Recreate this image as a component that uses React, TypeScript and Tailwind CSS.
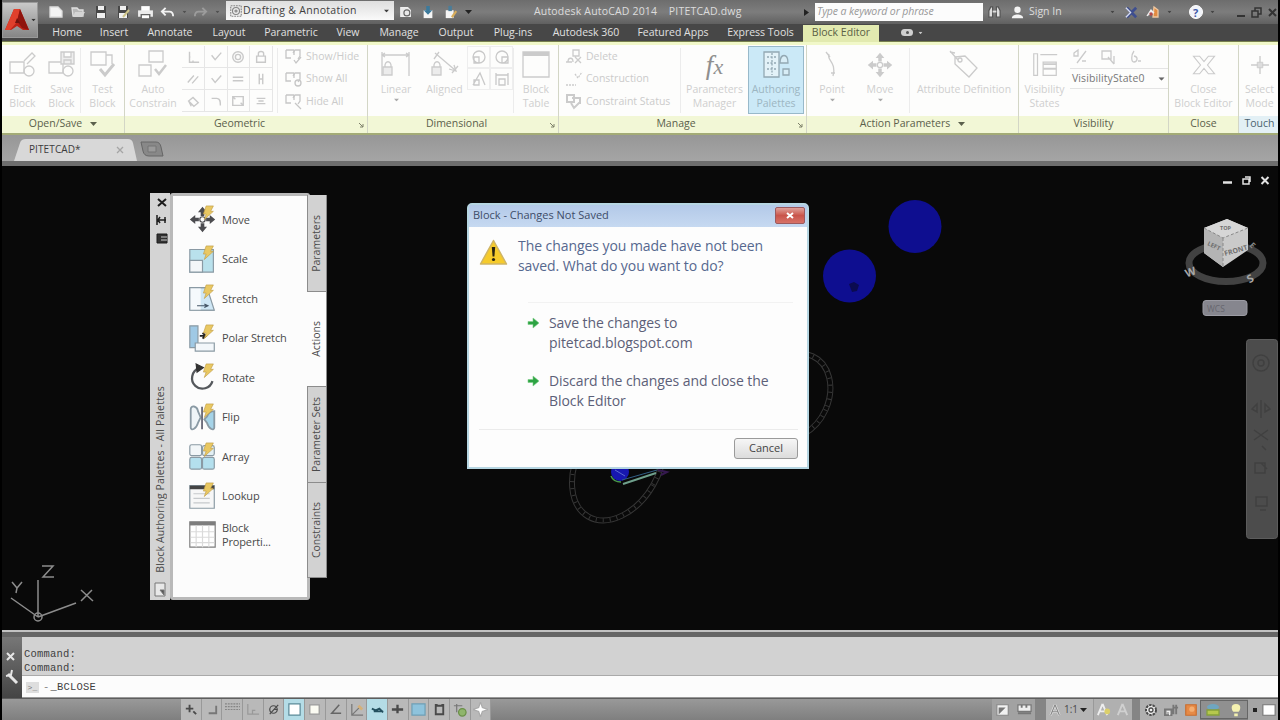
import type { ReactNode } from 'react'
import { clsx } from 'clsx'

const MENU = [
  { label: 'Home', width: 'w-[48px]' },
  { label: 'Insert', width: 'w-[46px]' },
  { label: 'Annotate', width: 'w-[66px]' },
  { label: 'Layout', width: 'w-[52px]' },
  { label: 'Parametric', width: 'w-[72px]' },
  { label: 'View', width: 'w-[42px]' },
  { label: 'Manage', width: 'w-[60px]' },
  { label: 'Output', width: 'w-[54px]' },
  { label: 'Plug-ins', width: 'w-[60px]' },
  { label: 'Autodesk 360', width: 'w-[86px]' },
  { label: 'Featured Apps', width: 'w-[88px]' },
  { label: 'Express Tools', width: 'w-[87px]' },
]

// All line icons share the same wrapper, the colour comes from the parent.
function Svg({
  size = 32,
  box = 32,
  className,
  children,
}: {
  size?: number
  box?: number
  className?: string
  children: ReactNode
}) {
  return (
    <svg
      width={size}
      height={size}
      viewBox={`0 0 ${box} ${box}`}
      fill="none"
      stroke="currentColor"
      strokeWidth={1.3}
      className={clsx('shrink-0', className)}
    >
      {children}
    </svg>
  )
}

function Caret({ className }: { className?: string }) {
  return (
    <svg width="7" height="4" viewBox="0 0 7 4" className={clsx('shrink-0', className)}>
      <path d="M0 0h7L3.5 4z" fill="currentColor" />
    </svg>
  )
}

/* ---------- title bar ---------- */

function TitleBar() {
  return (
    <div className="flex h-6 items-center bg-linear-to-b from-[#6d6d6d] via-[#7d7d7d] to-[#606060] text-[10.5px] text-[#dcdcdc]">
      <div className="w-[43px] shrink-0" />
      <div className="flex w-[181px] shrink-0 items-center">
        <Svg size={16} box={16} className="ml-[3px]">
          <path d="M2 3h8l4 4v6H2z" fill="#f4f4f4" stroke="#ddd" />
        </Svg>
        <Svg size={16} box={16} className="ml-[6px]">
          <path d="M2 4h5l2 2h4v6H3z" fill="#b9b9b9" stroke="#e0e0e0" />
          <path d="M5 8h10l-3 5H3z" fill="#d5d5d5" stroke="none" />
        </Svg>
        <Svg size={16} box={16} className="ml-[7px]">
          <path d="M3 2h10v12H3z" fill="#474747" stroke="none" />
          <path d="M5 2h6v4H5zM4 9h8v5H4z" fill="#f0f0f0" stroke="none" />
        </Svg>
        <Svg size={16} box={16} className="ml-[6px]">
          <path d="M3 2h10v12H3z" fill="#474747" stroke="none" />
          <path d="M5 2h6v4H5zM4 9h8v5H4z" fill="#f0f0f0" stroke="none" />
          <path d="M8 13l6-7" stroke="#cfc58a" strokeWidth={2} />
        </Svg>
        <Svg size={17} box={16} className="ml-[6px]">
          <path d="M4 2h8v5H4z" fill="#fff" stroke="none" />
          <path d="M1 6h14v6H1z" fill="#ececec" stroke="none" />
          <path d="M4 10h8v4H4z" fill="#fff" stroke="#666" />
        </Svg>
        <Svg size={15} box={16} className="ml-[6px]">
          <path d="M2 7h8c3 0 4 2 4 5M6 3L2 7l4 4" stroke="#f2f2f2" strokeWidth={2} />
        </Svg>
        <Caret className="ml-[6px] scale-[.6] text-[#505050]" />
        <Svg size={15} box={16} className="ml-[5px]">
          <path d="M14 7H6c-3 0-4 2-4 5M10 3l4 4-4 4" stroke="#9c9c9c" strokeWidth={2} />
        </Svg>
        <Caret className="ml-[6px] scale-[.6] text-[#505050]" />
      </div>
      <div className="mb-[3px] flex h-[19px] w-[168px] shrink-0 items-center bg-linear-to-b from-[#dedede] to-[#fafafa] pl-[3px] pr-1 text-[#3e3e3e]">
        <Svg size={14} box={16} className="text-[#858585]">
          <path d="M2 2h12v12H2z" strokeDasharray="2 1" />
          <circle cx="8" cy="8" r="4" />
          <circle cx="8" cy="8" r="1.2" />
        </Svg>
        <span className="flex-1 whitespace-nowrap tracking-[0.3px]">Drafting &amp; Annotation</span>
        <Caret className="scale-75" />
      </div>
      <div className="flex w-[140px] shrink-0 items-center">
        <Svg size={14} box={16} className="ml-[5px]">
          <path d="M2 3h8l3 3v7H2z" fill="#e8e8e8" stroke="#eee" />
          <circle cx="9" cy="9" r="3.4" stroke="#666" />
        </Svg>
        <Svg size={14} box={16} className="ml-[8px]">
          <path d="M3 6h10v9H3z" fill="#f5f5f5" stroke="none" />
          <path d="M6 1h4v5h3l-5 5-5-5h3z" fill="#3b7a9c" stroke="none" />
        </Svg>
        <Svg size={14} box={16} className="ml-[9px]">
          <path d="M2 6h9v9H2z" fill="#f5f5f5" stroke="none" />
          <path d="M5 1h4v6H5z" fill="#4a7d9a" stroke="none" />
          <path d="M9 14l5-7" stroke="#d8ad5a" strokeWidth={2.5} />
        </Svg>
        <Caret className="ml-[7px] text-[#222]" />
      </div>
      <div className="w-[270px] shrink-0 whitespace-pre tracking-[0.18px]">
        {'Autodesk AutoCAD 2014    PITETCAD.dwg'}
      </div>
      <svg width="5" height="7" viewBox="0 0 5 7" className="shrink-0">
        <path d="M0 0l5 3.500L0 7z" fill="#222" />
      </svg>
      <div className="ml-[6px] flex h-[18px] w-[168px] shrink-0 items-center bg-[#fcfcfc] pl-[2px] text-[10.5px] italic tracking-[-0.1px] text-[#999]">
        Type a keyword or phrase
      </div>
      <div className="ml-[4px] flex flex-1 items-center">
        <Svg size={15} box={16}>
          <path d="M2 13V6l2-4h2v11zM14 13V6l-2-4h-2v11z" fill="#ddd" stroke="#555" />
          <path d="M6 7h4" stroke="#ddd" strokeWidth={2} />
        </Svg>
        <Svg size={15} box={16} className="ml-[8px]">
          <circle cx="8" cy="5" r="3.4" fill="#f3f3f3" stroke="none" />
          <path d="M2 14c0-5 12-5 12 0z" fill="#f3f3f3" stroke="none" />
        </Svg>
        <span className="ml-[4px] whitespace-nowrap">Sign In</span>
        <Caret className="ml-[47px] scale-[.6] text-[#444]" />
        <Svg size={15} box={16} className="ml-[8px]">
          <path d="M3 3l5 5-5 5M13 3L8 8l5 5" stroke="#3e4e8f" strokeWidth={3} />
          <path d="M2 3l5 5-5 5" stroke="#d7dcee" strokeWidth={1.5} />
        </Svg>
        <Svg size={16} box={16} className="ml-[7px]">
          <path d="M8 3l4 3v7H7z" fill="#e28b41" stroke="#f0c8a0" />
          <path d="M1 12l4-6 3 3" fill="#eee" stroke="#eee" />
          <circle cx="5" cy="10" r="1.7" fill="#b5484a" stroke="none" />
        </Svg>
        <Caret className="ml-[4px] scale-[.6] text-[#444]" />
        <span className="ml-[16px] flex size-[14px] items-center justify-center rounded-full border border-white bg-[#f2f4fa] text-[11px] font-bold leading-none text-[#3f5aa8]">
          ?
        </span>
        <Caret className="ml-[6px] scale-[.6] text-[#444]" />
        <Svg size={42} box={42} className="ml-auto text-[#333]">
          <path d="M1 25h8" strokeWidth={2} />
          <path d="M16 20h6v6h-6zM19 20v-3h6v6h-3" strokeWidth={1.5} />
          <path d="M33 18l7 7m0-7l-7 7" strokeWidth={2} />
        </Svg>
      </div>
    </div>
  )
}

function MenuBar() {
  return (
    <div className="flex h-[18px] items-stretch border-b border-[#77804f] bg-[#474747] pl-[41px] text-[10.5px] font-medium text-[#e0e0e0]">
      {MENU.map((m) => (
        <div key={m.label} className={clsx('flex shrink-0 items-center justify-center whitespace-nowrap', m.width)}>
          {m.label}
        </div>
      ))}
      <div className="-mb-px -ml-px mt-px flex w-[76px] shrink-0 items-center justify-center whitespace-nowrap bg-[#e2eab0] pb-px text-[#5a6046]">
        Block Editor
      </div>
      <div className="ml-[22px] flex items-center">
        <div className="flex h-[7px] w-[12px] items-center justify-center rounded-sm bg-[#d0d0d0]">
          <div className="size-[3px] rounded-full bg-[#555]" />
        </div>
        <Caret className="ml-[4px] scale-[.6] text-[#c8c8c8]" />
      </div>
    </div>
  )
}

/* ---------- ribbon ---------- */

function Panel({
  title,
  width,
  caret,
  launcher,
  touch,
  children,
}: {
  title: string
  width: string
  caret?: boolean
  launcher?: boolean
  touch?: boolean
  children: ReactNode
}) {
  return (
    <div className={clsx('flex shrink-0 flex-col border-r border-[#d3d6c6]', width)}>
      <div className="flex h-[71px] overflow-hidden bg-[#fdfdfc]">{children}</div>
      <div
        className={clsx(
          'flex h-[17px] items-center justify-center whitespace-nowrap pb-px text-[10.5px] font-medium',
          touch ? 'bg-[#e3f0f5] text-[#4b6470]' : 'bg-[#f2f7d6] text-[#5b604c]',
        )}
      >
        <span className={clsx(launcher && 'flex-1 pr-1 text-center')}>{title}</span>
        {caret && <Caret className="ml-2" />}
        {launcher && (
          <svg width="6" height="6" viewBox="0 0 6 6" className="mr-[3px] mt-[2px]">
            <path d="M1 1l4 4M5 2v3H2" fill="none" stroke="#7d8069" />
          </svg>
        )}
      </div>
    </div>
  )
}

function Tool({
  icon,
  lines,
  width,
  caret,
  active,
}: {
  icon: ReactNode
  lines: string[]
  width: string
  caret?: boolean
  active?: boolean
}) {
  return (
    <div
      className={clsx(
        'flex shrink-0 flex-col items-center whitespace-nowrap text-[10.5px] leading-[14px]',
        active
          ? 'mt-px h-[68px] border border-[#98b9ca] bg-[#cbe9f7] pt-px text-[#9db6c2]'
          : 'pt-[3px] text-[#cfcfcf]',
        width,
      )}
    >
      <div className="flex h-[34px] items-center text-[#cbcbcb]">{icon}</div>
      {lines.map((l) => (
        <span key={l}>{l}</span>
      ))}
      {caret && <Caret className="mt-[2px] scale-75 text-[#aaa]" />}
    </div>
  )
}

function ListTool({ icon, label }: { icon: ReactNode; label: string }) {
  return (
    <div className="mt-px flex h-[21.5px] items-center whitespace-nowrap text-[10.5px] text-[#cbcbcb]">
      {icon}
      <span className="ml-[2px]">{label}</span>
    </div>
  )
}

function Divider() {
  return <div className="my-[3px] w-px shrink-0 bg-[#ececec]" />
}

const BLOCK_SHAPE = (
  <>
    <path d="M3 13h14v11H3z" />
    <circle cx="22" cy="22" r="5" />
  </>
)

const LOCK = (
  <>
    <path d="M3 18h9v8H3z" fill="#ececec" />
    <path d="M5 18c-1-7 7-7 6 0" />
  </>
)

const GEOMETRIC = [
  'M4 2v12h11M4 8h1M8 14v-2',
  'M3 6l4 5 7-8',
  'M8 2a6 6 0 100 12A6 6 0 008 2M8 5a3 3 0 100 6 3 3 0 000-6',
  'M3 7h10v7H3zM5 7V4c0-3 6-3 6 0v3',
  'M2 12l7-8M7 13l7-8',
  'M3 7l4 5 7-8',
  'M2 6h12M2 10h12',
  'M6 2v12M10 2v12M6 8h4',
  'M3 8l5-4 6 6-5 4zM3 8l3 6',
  'M3 5h6c4 0 4 4 4 8',
  'M2 3h12v10H2zM2 3l3 3M14 13l-3-3',
  'M3 5h10M3 11h10M5 8h6',
]

const DIMENSIONAL = [
  'M8 2a6 6 0 100 12A6 6 0 008 2M3 8h5v6H3z',
  'M8 2a6 6 0 100 12A6 6 0 008 2M8 8h6v6H8z',
  'M2 14L9 2l5 12M3 9h5v5H3z',
  'M2 2v12M14 2v12M2 4h12M5 8h6v6H5z',
]

function ShowIcon({ kind }: { kind: number }) {
  return (
    <Svg size={19} box={19} className="text-[#c6c6c6]">
      <path d="M1 3h8M1 3v8h5M9 3v5" />
      <path d="M8 6l2-3h5v6l-2 3" />
      {kind === 0 && <path d="M9 13l2 3 5-6" />}
      {kind === 1 && <circle cx="13" cy="13" r="3" />}
      {kind === 2 && <path d="M10 11l6 6" />}
    </Svg>
  )
}

function MoveArrows() {
  return (
    <>
      <path
        d="M16 2l5 6h-3v4h-4V8h-3zM16 30l5-6h-3v-4h-4v4h-3zM2 16l6-5v3h4v4H8v3zM30 16l-6-5v3h-4v4h4v3z"
        fill="currentColor"
        stroke="none"
      />
      <circle cx="16" cy="16" r="3" />
    </>
  )
}

function Ribbon() {
  return (
    <div className="flex h-[93px] overflow-hidden border-b-2 border-t-[3px] border-b-[#a3ab76] border-t-[#f1f8c9] bg-[#fdfdfc]">
      <Panel title="Open/Save" width="w-[123px]" caret>
        <Tool
          width="w-[41px]"
          lines={['Edit', 'Block']}
          icon={<Svg>{BLOCK_SHAPE}<path d="M17 12l8-8 3 3-8 8" /></Svg>}
        />
        <Tool
          width="w-[37px]"
          lines={['Save', 'Block']}
          icon={<Svg>{BLOCK_SHAPE}<path d="M15 3h13v12H15zM18 3v5h7V3M18 15v-4h7v4" fill="#eee" /></Svg>}
        />
        <Divider />
        <Tool
          width="w-[43px]"
          lines={['Test', 'Block']}
          icon={<Svg><path d="M4 3h15v13H4zM19 6h6v9" /><path d="M13 20l5 6 9-11" strokeWidth={3} /></Svg>}
        />
      </Panel>

      <Panel title="Geometric" width="w-[243px]" launcher>
        <Tool
          width="w-[56px]"
          lines={['Auto', 'Constrain']}
          icon={<Svg><path d="M12 2h14v11H12zM2 16h12v11H2z" /><path d="M18 20l4 5 7-9" strokeWidth={2.5} /></Svg>}
        />
        <div className="ml-[1px] mt-px grid h-[66px] w-[91px] shrink-0 grid-cols-4 text-[#c9c9c9]">
          {GEOMETRIC.map((d, i) => (
            <div key={i} className="flex items-center justify-center border-b border-r border-[#e6e6e6]">
              <Svg size={14} box={16}><path d={d} strokeWidth={1.6} /></Svg>
            </div>
          ))}
        </div>
        <div className="w-[4px]" />
        <Divider />
        <div className="ml-[7px]">
          <ListTool label="Show/Hide" icon={<ShowIcon kind={0} />} />
          <ListTool label="Show All" icon={<ShowIcon kind={1} />} />
          <ListTool label="Hide All" icon={<ShowIcon kind={2} />} />
        </div>
      </Panel>

      <Panel title="Dimensional" width="w-[191px]" launcher>
        <Tool
          width="w-[56px]"
          lines={['Linear']}
          caret
          icon={<Svg><path d="M2 3v24M29 3v24M2 6h27M5 4L2 6l3 2M26 4l3 2-3 2" />{LOCK}</Svg>}
        />
        <Tool
          width="w-[41px]"
          lines={['Aligned']}
          icon={<Svg><path d="M6 4l20 17M5 10L10 3M23 24l6-7M20 20l7 2-2-6" />{LOCK}</Svg>}
        />
        <div className="ml-[2px] mt-px grid h-[44px] w-[46px] shrink-0 grid-cols-2 text-[#c9c9c9]">
          {DIMENSIONAL.map((d, i) => (
            <div key={i} className="flex items-center justify-center border border-[#eeeeee]">
              <Svg size={16} box={16}><path d={d} /></Svg>
            </div>
          ))}
        </div>
        <div className="w-[2px]" />
        <Divider />
        <Tool
          width="w-[44px]"
          lines={['Block', 'Table']}
          icon={<Svg><path d="M3 3h26v25H3z" /><path d="M3 5h26" strokeWidth={4} /></Svg>}
        />
      </Panel>

      <Panel title="Manage" width="w-[248px]" launcher>
        <div className="ml-[6px] w-[115px] shrink-0">
          <ListTool label="Delete" icon={<Svg size={19} box={19}><path d="M1 15h6M3 15c0-5 5-5 5 0M8 3h6v6H8zM10 10l6 6m0-6l-6 6" /></Svg>} />
          <ListTool label="Construction" icon={<Svg size={19} box={19}><path d="M1 15h10M10 4l3 4 4-6" strokeDasharray="2 1" /></Svg>} />
          <ListTool label="Constraint Status" icon={<Svg size={19} box={19}><path d="M2 3h7v7H2zM7 6h8v6M6 11l3 5 6-6" strokeWidth={2} /></Svg>} />
        </div>
        <Divider />
        <Tool
          width="w-[67px]"
          lines={['Parameters', 'Manager']}
          icon={<span className="font-['Liberation_Serif',serif] text-[27px] italic leading-none text-[#8f8f8f]"><i>f</i><i className="text-[22px]">x</i></span>}
        />
        <Tool
          active
          width="w-[56px]"
          lines={['Authoring', 'Palettes']}
          icon={
            <Svg className="text-[#93a8b3]">
              <path d="M4 3h15v25H4z" fill="#e3f2f8" />
              <path d="M7 8h9M7 14h9M7 20h9M12 4v22" strokeDasharray="2 1.5" />
              <path d="M20 14c0-10 8-10 8 0zM23 20h6v6h-6z" fill="#d8edf6" />
            </Svg>
          }
        />
      </Panel>

      <Panel title="Action Parameters" width="w-[212px]" caret>
        <Tool width="w-[50px]" lines={['Point']} caret icon={<Svg><path d="M10 3l4 5M13 5c-3 6 8 8 4 22M19 24h-4" /></Svg>} />
        <Tool width="w-[46px]" lines={['Move']} caret icon={<Svg size={28}><MoveArrows /></Svg>} />
        <div className="w-[6px]" />
        <Divider />
        <Tool
          width="w-[108px]"
          lines={['Attribute Definition']}
          icon={<Svg><path d="M7 8l10-1 12 12-8 9L7 15zM2 2l8 9M2 3l5 1" /><circle cx="12" cy="11" r="2" /></Svg>}
        />
      </Panel>

      <Panel title="Visibility" width="w-[150px]">
        <Tool
          width="w-[51px]"
          lines={['Visibility', 'States']}
          icon={<Svg size={30}><path d="M4 4h4v23H4zM11 5h18M14 13h14v14H14z" /><path d="M14 15h14M14 20h14" strokeWidth={2} /></Svg>}
        />
        <div className="flex flex-1 flex-col">
          <div className="flex h-[23px] items-center gap-[9px] pl-[2px] text-[#cbcbcb]">
            <Svg size={18} box={18}><path d="M2 5l4-3v6H2zM5 15L14 3M10 13h4" /></Svg>
            <Svg size={18} box={18}><path d="M3 3h9v8H3zM9 9l6 7M15 8v8" /></Svg>
            <Svg size={18} box={18}><path d="M8 3c-3 4-3 11 0 11s5-5 0-6M12 13h3" /></Svg>
          </div>
          <div className="flex h-[21px] items-center border-y border-[#e4e4e4] pl-[2px] pr-[3px] text-[10.5px] text-[#777]">
            <span className="flex-1 tracking-[0.1px]">VisibilityState0</span>
            <Caret className="scale-90 text-[#666]" />
          </div>
        </div>
      </Panel>

      <Panel title="Close" width="w-[70px]">
        <Tool
          width="w-[69px]"
          lines={['Close', 'Block Editor']}
          icon={<Svg size={28}><path d="M4 6h7l5 6 5-6h7l-8 10 8 10h-7l-5-6-5 6H4l8-10z" /></Svg>}
        />
      </Panel>

      <Panel title="Touch" width="w-[42px]" touch>
        <Tool
          width="w-[41px]"
          lines={['Select', 'Mode']}
          icon={<Svg size={22}><path d="M16 3v26M3 16h26" strokeWidth={2} /><path d="M12 12h8v8h-8z" fill="#ddd" /></Svg>}
        />
      </Panel>
    </div>
  )
}

function DocTabs() {
  return (
    <div className="flex h-[31px] items-end border-b-[5px] border-[#6e6e6e] bg-linear-to-b from-[#979797] to-[#a5a5a5]">
      <div className="relative flex h-[22px] w-[136px] items-center pb-px pl-[27px] text-[10px] text-[#3c3c3c]">
        <svg width="136" height="22" viewBox="0 0 136 22" className="absolute left-0 top-0">
          <path d="M12 22L18 4q1-4 6-4h102q4 0 5 4l4 18z" fill="#d8d8d8" />
        </svg>
        <span className="relative flex-1 font-medium tracking-[0.1px]">PITETCAD*</span>
        <svg width="8" height="8" viewBox="0 0 8 8" className="relative mr-[14px]">
          <path d="M1 1l6 6m0-6L1 7" stroke="#a5a5a5" strokeWidth="1.3" />
        </svg>
      </div>
      <svg width="24" height="16" viewBox="0 0 24 16" className="mb-[4px] ml-[2px]">
        <path d="M1 1h15q4 0 5 5l2 9H9q-5 0-6-5z" fill="#888" stroke="#666" />
        <path d="M8 5h8v6H8z" fill="#9a9a9a" stroke="#747474" />
      </svg>
    </div>
  )
}

/* ---------- drawing area ---------- */

function ModelSpace() {
  return (
    <svg width="1276" height="464" viewBox="2 166 1276 464" className="block" fill="none">
      <circle cx="915" cy="226.500" r="26.500" fill="#0e0e90" />
      <circle cx="849.500" cy="276" r="26.500" fill="#0e0e90" />
      <path d="M849 284l5-2 5 3-2 6-5 1z" fill="#0b0b50" />

      {/* chain, seen from both sides of the dialog */}
      <g stroke="#373737">
        <ellipse cx="795" cy="396" rx="36" ry="46" transform="rotate(24 795 396)" />
        <ellipse cx="795" cy="396" rx="31" ry="41" transform="rotate(24 795 396)" />
        <ellipse cx="795" cy="396" rx="33.500" ry="43.500" transform="rotate(24 795 396)" strokeWidth="4" strokeDasharray="1 6" />
        <ellipse cx="618" cy="465" rx="43" ry="62" transform="rotate(30 618 465)" />
        <ellipse cx="618" cy="465" rx="38" ry="57" transform="rotate(30 618 465)" />
        <ellipse cx="618" cy="465" rx="40.500" ry="59.500" transform="rotate(30 618 465)" strokeWidth="4" strokeDasharray="1 6" />
      </g>
      <circle cx="620" cy="472" r="9" fill="#1717b0" />
      <path d="M611 476c2 5 6 6 10 6" stroke="#4a9a4a" strokeWidth="1.500" />
      <path d="M615 470l10 6" stroke="#5a6ad0" />
      <path d="M623 484l33-11" stroke="#6fa08c" strokeWidth="2" />
      <path d="M622 480l35-10" stroke="#315e85" />
      <path d="M658 470l9 2-6 3" stroke="#35194f" strokeWidth="2" />

      {/* UCS */}
      <g stroke="#8c8c8c" strokeWidth="1.500">
        <path d="M38 617V580M38 617l38-14M38 617L11 598" />
        <circle cx="38" cy="617" r="4" />
        <path d="M42 566h11l-10 11h11M12 582l5 6 5-6M17 588l-1 5M81 590l12 11M92 590l-11 11" />
      </g>

      {/* window buttons */}
      <g stroke="#e2e2e2" strokeWidth="2">
        <path d="M1223 182.500h9" strokeWidth="2.500" />
        <path d="M1243 179h6v5h-6zM1245 177h5v5" strokeWidth="1.500" />
        <path d="M1261.500 177l7 7m0-7l-7 7" />
      </g>

      {/* view cube */}
      <ellipse cx="1226" cy="263" rx="37" ry="18.500" stroke="#424242" strokeWidth="7" />
      <path d="M1204 228l23-9 21 9v22l-25 17-19-14z" fill="#cacaca" />
      <path d="M1204 228l23-9 21 9-25 10z" fill="#d6d6d6" />
      <path d="M1223 238v29l-19-14v-25z" fill="#b4b4b4" />
      <path d="M1204 228l19 10 25-10M1223 238v29" stroke="#888" strokeDasharray="3 2" />
      <g fill="#6f6f6f" stroke="none" fontFamily="Open Sans, sans-serif" fontWeight="700">
        <text x="1220" y="230" fontSize="5.500">TOP</text>
        <text x="1225" y="256" fontSize="7" transform="rotate(-16 1225 256)">FRONT</text>
        <text x="1207" y="245" fontSize="6" transform="rotate(25 1207 245)">LEFT</text>
        <text x="1185" y="276" fontSize="11" fill="#a8a8a8" transform="rotate(-20 1190 272)">W</text>
        <text x="1247" y="282" fontSize="11" fill="#a8a8a8" transform="rotate(-30 1251 278)">S</text>
        <text x="1251" y="249" fontSize="8" fill="#8a8a8a" transform="rotate(45 1254 245)">E</text>
      </g>
      <rect x="1203" y="300.500" width="44" height="15" rx="3" fill="#86868e" stroke="#9c9ca4" />
      <text x="1207" y="311.500" fontSize="8.500" fill="#66666e" fontFamily="Open Sans, sans-serif">WCS</text>

      {/* navigation bar */}
      <rect x="1246.500" y="339.500" width="31" height="199" rx="3" fill="#4c4c4c" stroke="#5c5c5c" />
      <g stroke="#404040" strokeWidth="1.500">
        <circle cx="1261" cy="363" r="8" />
        <path d="M1252 409l5-5v8zM1270 409l-5-5v8zM1261 400v18M1254 430l14 10M1254 440l14-10M1255 463h10v10h-10zM1261 463l6 6M1262 446l4 4M1256 497h11v9h-11zM1260 510h6" />
        <circle cx="1261" cy="363" r="3" />
      </g>
    </svg>
  )
}

/* ---------- block authoring palettes ---------- */

function Bolt() {
  return <path d="M20 1h8l-3 6h3L18 16l2-6h-3z" fill="#e9c862" stroke="#bf9c46" strokeWidth={0.7} />
}

const ACTIONS: { label: string; icon: ReactNode }[] = [
  { label: 'Move', icon: <g className="text-[#4c4c50]"><MoveArrows /></g> },
  {
    label: 'Scale',
    icon: <><path d="M2 5h26v25H2z" fill="#b9e1ec" /><path d="M2 17h14v13H2z" fill="#f3f6f8" /></>,
  },
  {
    label: 'Stretch',
    icon: <><path d="M2 4h19l8 25H2z" fill="#cfe7f5" /><path d="M2 4h12v25H2z" fill="#f5f9fc" stroke="none" /><path d="M2 29V4h19M2 29h27" /><path d="M10 24h11M18 22l4 2-4 2" stroke="#456" /></>,
  },
  {
    label: 'Polar Stretch',
    icon: <><path d="M2 2h9v24H2z" fill="#9fc9e5" /><path d="M8 21h21v9H8z" fill="#f3f7fa" /><path d="M13 13h6M16 10l4 3-4 3" stroke="#222" strokeWidth={2} /></>,
  },
  {
    label: 'Rotate',
    icon: <><path d="M12 6A11.500 11.500 0 1 0 27 20" stroke="#55585c" strokeWidth={2.5} /><path d="M9 1l8 4-7 5z" fill="#333" stroke="#333" /></>,
  },
  {
    label: 'Flip',
    icon: <><path d="M3 27V7c0-5 7-4 8 2l3 7-3 6c-2 7-8 9-8 5z" fill="#eef4f7" strokeWidth={2} /><path d="M29 27V9c-5 0-7 3-8 6l-3 3 3 4c2 7 8 9 8 5z" fill="#a5d3e8" strokeWidth={2} /><path d="M15.500 4v25" stroke="#556" strokeWidth={1.8} /></>,
  },
  {
    label: 'Array',
    icon: <><rect x="2" y="3" width="13" height="12" rx="2" fill="#f2f6f8" /><rect x="16" y="4" width="13" height="11" rx="2" fill="#e2eff4" /><rect x="2" y="17" width="13" height="13" rx="2" fill="#b4e0ee" /><rect x="16" y="17" width="13" height="13" rx="2" fill="#b4e0ee" /></>,
  },
  {
    label: 'Lookup',
    icon: <><path d="M2 4h27v25H2z" fill="#f7f7f7" /><path d="M2 6h27" stroke="#444" strokeWidth={4} /><path d="M6 13h18M6 18h18M6 23h18" stroke="#c6c9cc" /></>,
  },
]

const PALETTE_TABS = [
  { label: 'Parameters', height: 'h-[97px]' },
  { label: 'Actions', height: 'h-[95px]', active: true },
  { label: 'Parameter Sets', height: 'h-[96px]' },
  { label: 'Constraints', height: 'h-[95px]' },
]

function Palette() {
  return (
    <div className="absolute left-[148px] top-[27px] flex h-[407px] text-[11px] text-[#4a4a4a]">
      <div className="flex w-[20px] flex-col items-center bg-[#d4d4d4] pt-[4px]">
        <svg width="12" height="48" viewBox="0 0 12 48" fill="none" stroke="#1d1d1d" className="ml-[3px]">
          <path d="M2 2l8 7m0-7L2 9" strokeWidth="2" />
          <path d="M1 18v10M1 23h9M4 20l-2 3 2 3M9 20v6" strokeWidth="1.500" />
          <path d="M1 37h10v9H1z" fill="#333" />
          <path d="M5 40h6M5 43h6" stroke="#ccc" />
        </svg>
        <span className="mt-auto whitespace-nowrap text-[10.5px] font-medium leading-[14px] tracking-[0.12px] [writing-mode:vertical-rl] rotate-180">
          Block Authoring Palettes - All Palettes
        </span>
        <svg width="12" height="16" viewBox="0 0 12 16" fill="none" stroke="#777" className="mb-[2px] mt-[9px]">
          <path d="M1 1h10v13H1z" fill="#e8e8e8" />
          <path d="M6 8h4v5z" fill="#555" />
        </svg>
      </div>
      <div className="w-[140px] rounded-[3px] border-[3px] border-[#b9b9b9] bg-[#fcfcfc] pl-[15px] pt-[4px]">
        {ACTIONS.map((a) => (
          <div key={a.label} className="flex h-[39.500px] items-center">
            <Svg size={29} className="text-[#8a9aa4]">
              {a.icon}
              <Bolt />
            </Svg>
            <span className="ml-[5px] whitespace-nowrap tracking-[-0.1px]">{a.label}</span>
          </div>
        ))}
        <div className="flex h-[37px] items-center">
          <Svg size={29} className="text-[#7d7d7d]">
            <path d="M2 2h28v28H2z" fill="#fff" />
            <path d="M2 4h28" strokeWidth={4} />
            <path d="M3 13h26M3 19h26M3 25h26M9 6v24M16 6v24M23 6v24" stroke="#dadada" />
          </Svg>
          <span className="ml-[5px] leading-[14px] tracking-[-0.15px]">
            Block
            <br />
            Properti...
          </span>
        </div>
      </div>
      <div className="-ml-[3px] flex w-[20px] flex-col pt-[2px]">
        {PALETTE_TABS.map((t) => (
          <div
            key={t.label}
            className={clsx(
              'flex shrink-0 items-center justify-center border-b border-r border-[#8c8c8c]',
              t.active ? 'bg-[#fcfcfc]' : 'border-l bg-[#d2d2d2]',
              t.height,
            )}
          >
            <span className="mr-[2px] whitespace-nowrap text-[10.5px] leading-[16px] [writing-mode:vertical-rl] rotate-180">{t.label}</span>
          </div>
        ))}
      </div>
    </div>
  )
}

/* ---------- dialog ---------- */

function CommandLink({ lines }: { lines: string[] }) {
  return (
    <div className="flex h-[58px] items-start whitespace-nowrap text-[14px] leading-[20px] tracking-[-0.08px] text-[#5c6078]">
      <svg width="13" height="12" viewBox="0 0 13 12" className="mr-[9px] mt-[4px] shrink-0">
        <path d="M1 4.500h5V1l6 5-6 5V7.500H1z" fill="#2da343" stroke="#7ccf86" strokeWidth=".6" />
      </svg>
      <span>
        {lines[0]}
        <br />
        {lines[1]}
      </span>
    </div>
  )
}

function ChangesDialog() {
  return (
    <div className="absolute left-[465px] top-[37px] flex h-[266px] w-[342px] flex-col rounded-t-[5px] border-2 border-[#b6d6e2] bg-[#fdfdfd]">
      <div className="flex h-[22px] shrink-0 items-center bg-linear-to-b from-[#b3c9e8] to-[#c6d9f1] pl-[4px] pr-[2px] text-[11px] text-[#3d4c68]">
        <span className="flex-1 whitespace-nowrap pb-px">Block - Changes Not Saved</span>
        <div className="mb-px flex h-[17px] w-[30px] items-center justify-center rounded-[2px] border border-[#9c5a5e] bg-linear-to-b from-[#dfa19b] via-[#c9544b] to-[#d77268]">
          <svg width="8" height="7" viewBox="0 0 8 7">
            <path d="M1 1l6 5m0-5L1 6" stroke="#fff" strokeWidth="2" />
          </svg>
        </div>
      </div>
      <div className="flex h-[75px] shrink-0 pl-[10px] pt-[9px]">
        <svg width="29" height="27" viewBox="0 0 29 27" className="mt-[3px] shrink-0">
          <path d="M14.500 1.500L27.500 25h-26z" fill="#f6cb2b" stroke="#cfb566" strokeWidth="1.500" strokeLinejoin="round" />
          <path d="M12.800 8h3.400l-.8 9.500h-1.800z" fill="#292312" />
          <circle cx="14.500" cy="20.500" r="1.600" fill="#292312" />
        </svg>
        <div className="ml-[10px] whitespace-nowrap text-[14px] leading-[20px] tracking-[-0.06px] text-[#56688f]">
          The changes you made have not been
          <br />
          saved. What do you want to do?
        </div>
      </div>
      <div className="ml-[59px] mr-[14px] h-px shrink-0 bg-[#f2f2f2]" />
      <div className="flex-1 pl-[58px] pt-[10px]">
        <CommandLink lines={['Save the changes to', 'pitetcad.blogspot.com']} />
        <CommandLink lines={['Discard the changes and close the', 'Block Editor']} />
      </div>
      <div className="ml-[10px] mr-[9px] flex h-[38px] shrink-0 items-start justify-end border-t border-[#ebebeb] pt-[8px]">
        <div className="flex h-[21px] w-[64px] items-center justify-center rounded-[3px] border border-[#9a9a9a] bg-linear-to-b from-[#f6f6f6] to-[#dcdcdc] text-[11px] text-[#444]">
          Cancel
        </div>
      </div>
    </div>
  )
}

/* ---------- command line and status bar ---------- */

function CommandLine() {
  return (
    <div className="flex h-[68px] border-t-2 border-[#c2c2c2] bg-[#666] pt-[5px]">
      <div className="flex w-[20px] shrink-0 flex-col items-center bg-linear-to-b from-[#777] to-[#444]">
        <svg width="18" height="54" viewBox="0 0 18 54" fill="none" stroke="#e6e6e6">
          <path d="M4 16l7 7m0-7l-7 7" strokeWidth="2" />
          <path d="M5 37l9 9" strokeWidth="3" />
          <path d="M3 39l5-1 1-5" strokeWidth="2" />
        </svg>
      </div>
      <div className="flex flex-1 flex-col font-['Liberation_Mono',monospace] text-[10.5px] tracking-[0.2px] text-[#3f3f3f]">
        <div className="h-[39px] border-b border-[#aaa] bg-[#d2d2d2] pl-[2px] pt-[10px] leading-[14px]">
          <div>Command:</div>
          <div>Command:</div>
        </div>
        <div className="flex flex-1 items-center bg-[#fcfcfc] pl-[4px] pt-[2px]">
          <div className="flex h-[11px] w-[13px] items-center justify-center bg-[#dedede] text-[8px] text-[#777]">&gt;_</div>
          <span className="ml-[4px] text-[#888]">-</span>
          <span className="ml-[1px]">_BCLOSE</span>
        </div>
        <div className="h-px bg-[#999]" />
      </div>
    </div>
  )
}

const STATUS: { icon: ReactNode; on?: boolean }[] = [
  { icon: <path d="M7 3v8M3 7h8M11 10l3 3" strokeWidth={2} /> },
  { icon: <path d="M5 12h8V4" strokeWidth={2} stroke="#777" /> },
  { icon: <path d="M0 2h16M0 5h16M0 8h16" strokeDasharray="2 1" stroke="#858585" /> },
  { icon: <path d="M3 2v11h12M8 13V9h3" stroke="#999" /> },
  { icon: <><circle cx="8" cy="8" r="4" /><path d="M4 13l9-10M8 8h4" /></> },
  { icon: <path d="M2 2h12v12H2z" fill="#fff" stroke="#5b8a98" />, on: true },
  { icon: <path d="M3 3h10v10H3z" fill="#fbfbf2" stroke="#999" /> },
  { icon: <path d="M12 3L4 12h10" strokeWidth={1.6} stroke="#666" /> },
  { icon: <><path d="M3 2v12h12M3 14l9-9" stroke="#777" /><path d="M10 4l4 4" stroke="#d5b077" strokeWidth={3} /></> },
  { icon: <path d="M2 7l4 2 4-2 4 4M4 10h10" stroke="#24505f" strokeWidth={2} />, on: true },
  { icon: <path d="M2 8h12M8 3v9" strokeWidth={2.5} /> },
  { icon: <path d="M1 2h14v12H1z" fill="#8ec3dc" stroke="#6f9fb5" /> },
  { icon: <path d="M4 4h8v9H4zM3 3h3M10 3h3" strokeWidth={2} /> },
  { icon: <><path d="M2 4h9M5 2v9" stroke="#777" /><circle cx="11" cy="11" r="4" fill="#8fb56c" stroke="#6a9048" /></> },
  { icon: <path d="M8 0l2 6 6 2-6 2-2 6-2-6-6-2 6-2z" fill="#fff" stroke="#aaa" /> },
]

function StatusBar() {
  return (
    <div className="flex h-[22px] items-stretch border-t border-[#5e5e5e] bg-linear-to-b from-[#999] to-[#7f7f7f] text-[#4a4a4a]">
      <div className="w-[179px] shrink-0" />
      {STATUS.map((s, i) => (
        <div
          key={i}
          className={clsx(
            'flex w-[20.7px] shrink-0 items-center justify-center border-r border-[#999]',
            s.on ? 'bg-[#b4dce6]' : 'bg-[#b9b9b9]',
          )}
        >
          <Svg size={15} box={16}>{s.icon}</Svg>
        </div>
      ))}
      <div className="flex-1" />
      <div className="flex w-[43px] items-center justify-around bg-[#a2a2a2]">
        <Svg size={14} box={16}><path d="M1 2h13v12H1z" fill="#f2f2f2" stroke="#888" /><path d="M3 5h8L3 13z" fill="#777" stroke="none" /></Svg>
        <Svg size={15} box={16}><path d="M1 3h14v7H1z" fill="#eee" stroke="#777" /><path d="M1 12h14M5 3v3M10 3v3" stroke="#777" strokeWidth={2} /></Svg>
      </div>
      <div className="w-[11px] bg-[#858585]" />
      <div className="flex w-[47px] items-center bg-[#b5b5b5] text-[10px]">
        <Svg size={14} box={16} className="ml-[2px]"><path d="M8 2l5 12M8 2L3 14M5 10h6" stroke="#eee" strokeWidth={2.5} /><path d="M8 2l5 12M8 2L3 14M5 10h6" stroke="#888" /></Svg>
        <span className="ml-[2px]">1:1</span>
        <Caret className="ml-[2px] text-[#222]" />
      </div>
      <div className="flex w-[39px] items-center justify-around border-l border-[#999] bg-[#b0b0b0]">
        <Svg size={15} box={16}><path d="M7 2l5 12M7 2L2 14M4 10h6" stroke="#eee" strokeWidth={2} /><circle cx="12" cy="10" r="3" fill="#dbcf6a" stroke="none" /></Svg>
        <Svg size={15} box={16}><path d="M8 2l5 12M8 2L3 14M5 10h6" stroke="#d0d0d0" strokeWidth={2} /></Svg>
      </div>
      <div className="w-[8px] bg-[#858585]" />
      <div className="flex w-[60px] items-center justify-around bg-[#b0b0b0]">
        <Svg size={16} box={16}><circle cx="8" cy="8" r="5" fill="#eee" strokeWidth={2} strokeDasharray="2.500 1" /><circle cx="8" cy="8" r="2" /></Svg>
        <Svg size={15} box={16}><path d="M1 8h7v6H1zM10 13V3M13 13V3M9 6h6" stroke="#777" strokeWidth={2} /><path d="M3 10h3v4" stroke="#eee" /></Svg>
        <Svg size={14} box={16}><path d="M2 2h12v12H2z" fill="#e68a46" stroke="#c96d2e" /><circle cx="9" cy="7" r="3" fill="#f4ad70" stroke="none" /></Svg>
      </div>
      <div className="my-px flex w-[48px] items-center justify-around border border-[#666] bg-[#909090]">
        <Svg size={16} box={16}><ellipse cx="8" cy="5" rx="6" ry="3" fill="#6fa6c0" stroke="none" /><path d="M2 8h12v5H2z" fill="#b6c84d" stroke="#85a03a" /></Svg>
        <Svg size={14} box={16}><path d="M8 1c-7 0-5 7-3 9h6c2-2 4-9-3-9zM6 12h4v3H6z" fill="#f4f1b0" stroke="none" /></Svg>
      </div>
      <div className="flex w-[30px] items-center justify-between bg-[#a5a5a5] pl-[5px] pr-[2px]">
        <div className="size-[4px] bg-[#222]" />
        <Svg size={14} box={16}><path d="M1 2h14v12H1z" fill="#fff" stroke="#777" /></Svg>
      </div>
    </div>
  )
}

function AppButton() {
  return (
    <div className="absolute left-0 top-[2px] flex h-[36px] w-[36px] items-center border border-[#999] bg-linear-to-b from-[#c9c9c9] to-[#868686]">
      <svg width="24" height="26" viewBox="0 0 24 26" className="ml-[2px]">
        <path d="M9 2h6l9 21h-6l-6-4-6 4H0z" fill="#bd2216" />
        <path d="M9 2h6l-3 13-7 8H0z" fill="#e0402c" />
        <path d="M15 2l9 21-7-2-5-7z" fill="#8f140e" />
        <path d="M10 16l2-5 3 5z" fill="#6f120d" />
      </svg>
      <Caret className="ml-px scale-[.65] text-[#333]" />
    </div>
  )
}

export default function App() {
  return (
    <div className="h-[720px] w-[1280px] overflow-hidden bg-black px-[2px] font-['Open_Sans','Noto_Sans',sans-serif]">
      <div className="relative flex h-full flex-col overflow-hidden">
        <TitleBar />
        <MenuBar />
        <Ribbon />
        <DocTabs />
        <div className="relative h-[464px] shrink-0 bg-[#090909]">
          <ModelSpace />
          <Palette />
          <ChangesDialog />
        </div>
        <CommandLine />
        <StatusBar />
        <AppButton />
      </div>
    </div>
  )
}
